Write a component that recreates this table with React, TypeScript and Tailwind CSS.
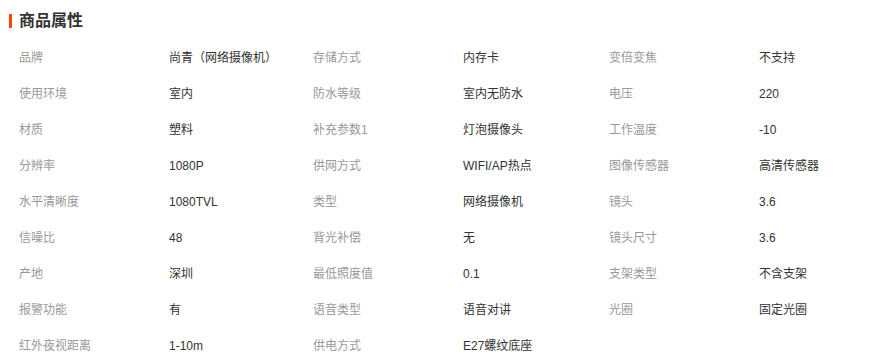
import { Fragment } from "react";

const rows: [string, string][][] = [
  [["品牌", "尚青（网络摄像机）"], ["存储方式", "内存卡"], ["变倍变焦", "不支持"]],
  [["使用环境", "室内"], ["防水等级", "室内无防水"], ["电压", "220"]],
  [["材质", "塑料"], ["补充参数1", "灯泡摄像头"], ["工作温度", "-10"]],
  [["分辨率", "1080P"], ["供网方式", "WIFI/AP热点"], ["图像传感器", "高清传感器"]],
  [["水平清晰度", "1080TVL"], ["类型", "网络摄像机"], ["镜头", "3.6"]],
  [["信噪比", "48"], ["背光补偿", "无"], ["镜头尺寸", "3.6"]],
  [["产地", "深圳"], ["最低照度值", "0.1"], ["支架类型", "不含支架"]],
  [["报警功能", "有"], ["语音类型", "语音对讲"], ["光圈", "固定光圈"]],
  [["红外夜视距离", "1-10m"], ["供电方式", "E27螺纹底座"]],
];

export default function App() {
  return (
    <div className="w-[878px] h-[362px] overflow-hidden bg-white font-['Liberation_Sans','Noto_Sans_CJK_SC',sans-serif]">
      {/* Section title */}
      <div className="flex items-center h-[40px] pl-[9px] pt-[2px]">
        <span className="w-[3px] h-[14px] bg-[#ff4400]" />
        <h3 className="ml-[7px] text-[16px] font-bold text-[#333] leading-none">商品属性</h3>
      </div>

      {/* Attribute table */}
      <div className="pl-[19px]">
        {rows.map((row, i) => (
          <div key={i} className="grid grid-cols-[150px_144px_150px_146px_150px_1fr] h-[36px] items-center text-[12px]">
            {row.map(([label, value]) => (
              <Fragment key={label}>
                <span className="text-[#999] whitespace-nowrap">{label}</span>
                <span className="text-[#333] whitespace-nowrap">{value}</span>
              </Fragment>
            ))}
          </div>
        ))}
      </div>
    </div>
  );
}
